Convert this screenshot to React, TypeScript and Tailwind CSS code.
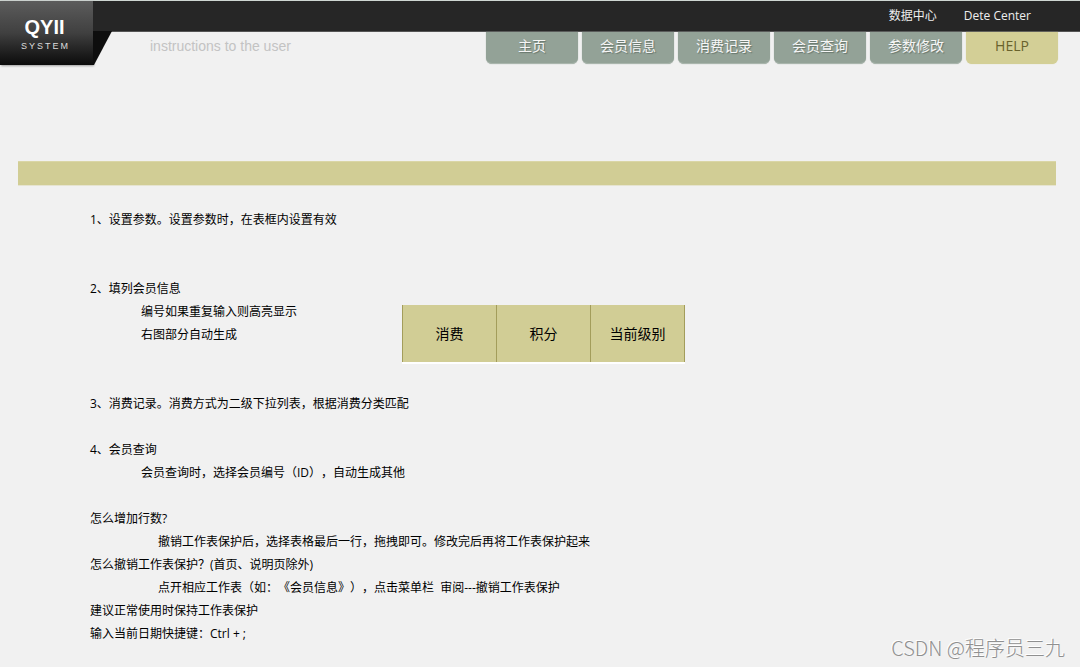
const tabs = ["主页", "会员信息", "消费记录", "会员查询", "参数修改"];
const fields = ["消费", "积分", "当前级别"];

function Header() {
  return (
    <header className="flex items-start border-t border-[#cfd6d2]">
      <div className="flex h-16 w-[93px] shrink-0 flex-col items-center bg-linear-to-b from-[#5c5c5c] via-[#404040] to-[#0c0c0c] pt-4 pr-1 font-['Liberation_Sans',sans-serif] text-white shadow-[1px_1px_2px_rgba(0,0,0,0.35)]">
        <strong className="text-xl leading-5">QYII</strong>
        <span className="pl-0.5 text-[9px] leading-[18px] tracking-[2px] text-[#dddddd]">SYSTEM</span>
      </div>
      <div className="min-w-0 flex-1">
        <div className="flex h-[31px] items-center justify-end gap-[27px] border-b border-[#555555] bg-[#262626] pr-[49px] text-xs text-[#eeeeee]">
          <a href="#data">数据中心</a>
          <a href="#center">Dete Center</a>
        </div>
        <div className="flex items-start">
          <svg className="-mt-px h-[34px] w-5 shrink-0" viewBox="0 0 20 34" aria-hidden="true">
            <path d="M0 0H19L1 34H0Z" fill="#0e0e0e" />
          </svg>
          <h1 className="pt-1 pl-[37px] font-['Liberation_Sans',sans-serif] text-sm leading-5 whitespace-nowrap text-[#c3c3c3]">
            instructions to the user
          </h1>
          <nav className="ml-auto flex gap-1 pr-[22px] text-sm">
            {tabs.map((tab) => (
              <a
                key={tab}
                href="#tab"
                className="flex h-8 w-[92px] justify-center rounded-b-md border-b border-[#a9b5ac] bg-[#93a297] pt-1 leading-5 text-[#f6f6f6] shadow-[0_0_1px_#93a297] [text-shadow:1px_1px_1px_#66756b]"
              >
                {tab}
              </a>
            ))}
            <a
              href="#help"
              aria-current="page"
              className="flex h-8 w-[92px] justify-center rounded-b-md bg-[#d3cf96] pt-1 leading-5 text-[#69622c] shadow-[0_0_1px_#d3cf96]"
            >
              HELP
            </a>
          </nav>
        </div>
      </div>
    </header>
  );
}

export default function App() {
  return (
    <div className="relative min-h-screen bg-[#f1f1f1] font-['Open_Sans','Noto_Sans_CJK_SC',sans-serif] text-black">
      <Header />
      <main className="pt-24">
        <div className="mr-6 ml-[18px] h-6 border-t border-[#dad6a6] bg-[#d1cd95] shadow-[0_1px_0_#e6e4d0]" />
        <div className="px-[90px] pt-[23px] pb-5 text-xs leading-[23px] [text-spacing-trim:space-all]">
          <p>1、设置参数。设置参数时，在表框内设置有效</p>
          <section className="mt-[46px] flex items-start">
            <div className="w-[312px] shrink-0">
              <p>2、填列会员信息</p>
              <p className="pl-[51px]">编号如果重复输入则高亮显示</p>
              <p className="pl-[51px]">右图部分自动生成</p>
            </div>
            <table className="mt-7 border-collapse text-sm">
              <thead>
                <tr>
                  {fields.map((field) => (
                    <th
                      key={field}
                      scope="col"
                      className="h-[58px] w-[94px] border-x border-b-2 border-x-[#a39d5b] border-b-white bg-[#d1cd95] p-0 text-center font-normal"
                    >
                      {field}
                    </th>
                  ))}
                </tr>
              </thead>
            </table>
          </section>
          <p className="mt-7">3、消费记录。消费方式为二级下拉列表，根据消费分类匹配</p>
          <section className="mt-[23px]">
            <p>4、会员查询</p>
            <p className="pl-[51px]">会员查询时，选择会员编号（ID），自动生成其他</p>
          </section>
          <section className="mt-[23px]">
            <p>怎么增加行数?</p>
            <p className="pl-[68px]">撤销工作表保护后，选择表格最后一行，拖拽即可。修改完后再将工作表保护起来</p>
            <p>怎么撤销工作表保护？(首页、说明页除外)</p>
            <p className="pl-[68px] whitespace-pre-wrap">点开相应工作表（如：《会员信息》），点击菜单栏  审阅---撤销工作表保护</p>
            <p>建议正常使用时保持工作表保护</p>
            <p>输入当前日期快捷键：Ctrl + ;</p>
          </section>
        </div>
      </main>
      <div className="absolute right-[15px] bottom-1 font-['Noto_Sans_CJK_SC',sans-serif] text-xl leading-[30px] font-light text-[#909090] [text-shadow:-1px_-1px_0_#ffffff]">
        CSDN @程序员三九
      </div>
    </div>
  );
}
